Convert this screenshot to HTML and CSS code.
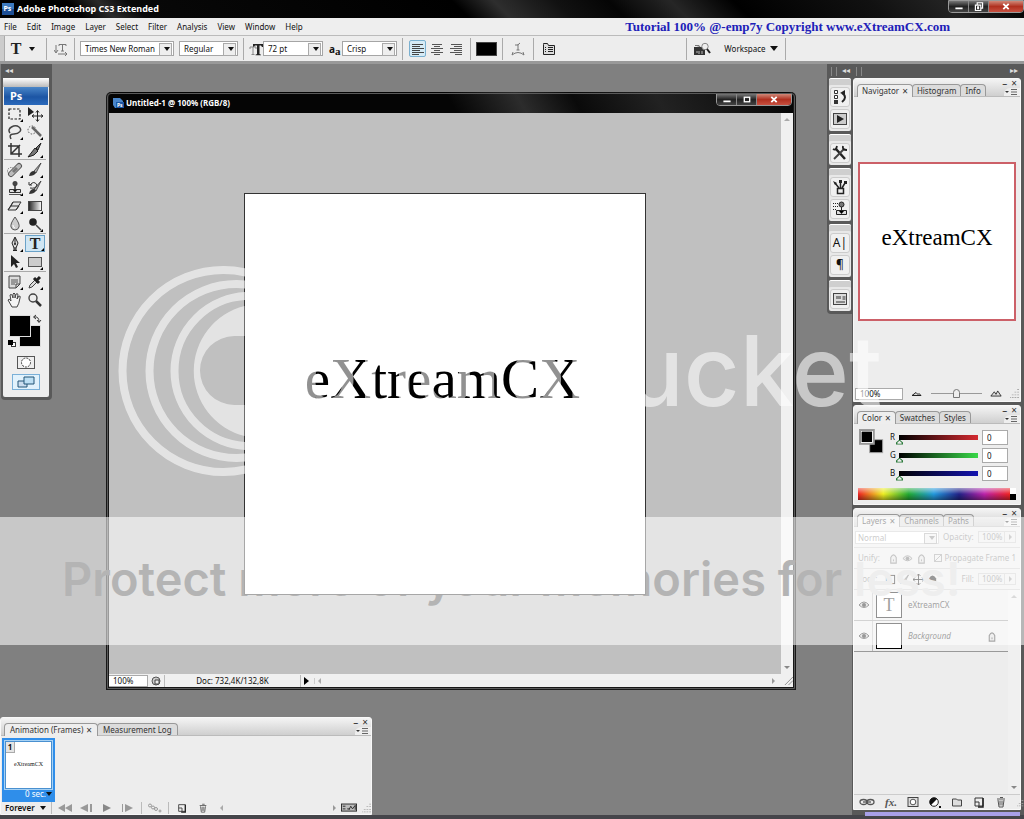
FILE: index.html
```html
<!DOCTYPE html>
<html lang="en">
<head>
<meta charset="utf-8">
<title>Adobe Photoshop CS3 Extended</title>
<link rel="stylesheet" href="styles.css">
</head>
<body>
<svg class="defs" aria-hidden="true">
  <symbol id="corner" viewBox="0 0 16 16"><path d="M16 13v3h-3z"/></symbol>
  <symbol id="grip" viewBox="0 0 10 10"><path d="M9 0v1M9 3v1M9 6v1M9 9v1M6 3v1M6 6v1M6 9v1M3 6v1M3 9v1M0 9v1" stroke="#aaa" stroke-width="2"/></symbol>
  <symbol id="flyout" viewBox="0 0 16 8"><path d="M1 3h4l-2 2z" fill="#333"/><path d="M7 1.500h6M7 4h6M7 6.500h6" stroke="#666"/></symbol>
  <symbol id="page" viewBox="0 0 12 12"><path d="M2 2h8v8H6V6H2z" fill="#eee" stroke="#333"/><path d="M2 6v4h4" fill="none" stroke="#333"/><path d="M10 2v9H5" fill="none" stroke="#222" stroke-width="1.500"/></symbol>
  <symbol id="trash" viewBox="0 0 12 12"><path d="M2 3h8M5 1.500h3M3 4l1 7h4l1-7M5 4.500v5M7 4.500v5" fill="none" stroke="#555"/></symbol>
  <symbol id="eye" viewBox="0 0 12 10"><path d="M1 5q5-6 10 0-5 5-10 0z" fill="#ccc" stroke="#222"/><circle cx="6" cy="5" r="2" fill="#111"/></symbol>
  <symbol id="lock" viewBox="0 0 10 12"><path d="M2 11V5q3-6 6 0v6z" fill="#ddd" stroke="#333" stroke-width="1.200"/><path d="M5 7v2" stroke="#333"/></symbol>
  <symbol id="brush" viewBox="0 0 16 16"><path d="M14 1 7 9l2 2z" fill="#aaa" stroke="#333" stroke-width=".8"/><path d="M7 9q-4 0-5 5 5 0 7-3z" fill="#333"/></symbol>
  <symbol id="stamp" viewBox="0 0 16 16"><circle cx="8" cy="3.500" r="2.500" fill="#444"/><path d="M8 5v5" stroke="#333" stroke-width="1.500"/><path d="M2.500 12.500v-3h11v3z" fill="#ddd" stroke="#333"/><path d="M6 10h4l-2 2.500z" fill="#111"/><path d="M2 14.500h12" stroke="#555"/></symbol>
</svg>
<div class="app">
  <header class="titlebar">
    <svg class="logo" viewBox="0 0 12 12"><rect width="12" height="12" fill="#3c7ac0"/><rect y="6" width="12" height="6" fill="#1d4f96"/><text x="1.500" y="8" class="logo-text">Ps</text></svg>
    <h1>Adobe Photoshop CS3 Extended</h1>
    <div class="winbtns">
      <button aria-label="Minimize"><svg viewBox="0 0 12 10"><path d="M2 7h8" stroke="#fff" stroke-width="2"/></svg></button>
      <button aria-label="Restore"><svg viewBox="0 0 12 10"><path d="M2 3.500h6v6H2zM4 3V.8h6v6H8M4.500 5.500h1v2h-1z" fill="none" stroke="#fff" stroke-width="1.300"/></svg></button>
      <button class="close" aria-label="Close"><svg viewBox="0 0 12 10"><path d="m3 2 6 6M9 2 3 8" stroke="#fff" stroke-width="2"/></svg></button>
    </div>
  </header>
  <nav class="menubar">
    <button>File</button><button>Edit</button><button>Image</button><button>Layer</button><button>Select</button><button>Filter</button><button>Analysis</button><button>View</button><button>Window</button><button>Help</button>
    <span class="credit">Tutorial 100% @-emp7y Copyright www.eXtreamCX.com</span>
  </nav>
  <section class="options" aria-label="Type options">
    <span class="handle"></span>
    <button class="type-tool"><b class="serif-t">T</b><i class="tri"></i></button>
    <span class="sep"></span>
    <button class="ic wide" aria-label="Text orientation"><svg viewBox="0 0 14 14"><path d="M2 3v7M0 8l2 3 2-3M5 4V2.500h7V4M8.500 2v7M7 9h3M4 12h9M11 10l2 2-2 2" fill="none" stroke="#777"/></svg></button>
    <span class="sep"></span>
    <label class="sel w-font"><select aria-label="Font"><option>Times New Roman</option></select></label>
    <label class="sel w-style"><select aria-label="Font style"><option>Regular</option></select></label>
    <span class="sep"></span>
    <svg class="ic size" viewBox="0 0 14 14"><path d="M4 2h10v3h-1l-1-1.500h-1.500V12l1.500.7v.5H6.500v-.5l1.500-.7V3.500H6L5 5H4z" fill="#222"/><path d="M1 5h6v2M4 5v7M2.500 12.500h3M1 5v2" fill="none" stroke="#888"/></svg>
    <label class="sel w-size"><select aria-label="Font size"><option>72 pt</option></select></label>
    <span class="aa">a<small>a</small></span>
    <label class="sel w-aa"><select aria-label="Anti-aliasing"><option>Crisp</option></select></label>
    <span class="sep"></span>
    <button class="ic align on" aria-label="Left align"><svg viewBox="0 0 14 12"><path d="M1 1.500h11M1 3.500h8M1 5.500h12M1 7.500h8M1 9.500h12M1 11.500h7" stroke="#444"/></svg></button>
    <button class="ic align" aria-label="Center align"><svg viewBox="0 0 14 12"><path d="M2 1.500h10M4 3.500h6M1 5.500h12M4 7.500h6M1 9.500h12M4 11.500h6" stroke="#555"/></svg></button>
    <button class="ic align" aria-label="Right align"><svg viewBox="0 0 14 12"><path d="M2 1.500h11M5 3.500h8M1 5.500h12M5 7.500h8M1 9.500h12M6 11.500h7" stroke="#555"/></svg></button>
    <span class="sep"></span>
    <button class="swatch" aria-label="Text color"></button>
    <span class="sep"></span>
    <button class="ic mid" aria-label="Warp text"><svg viewBox="0 0 14 14"><path d="M4 3q3 1 5-2M7 2v6M5.500 8h3M1 13q6-5 12 0M1 13l1-3M13 13l-1-3" fill="none" stroke="#777"/></svg></button>
    <span class="sep"></span>
    <button class="ic mid" aria-label="Character panel"><svg viewBox="0 0 14 14"><path d="M1.500 2.500v10h11v-9h-6l-1-2h-4z" fill="#ddd" stroke="#222"/><path d="M6 5.500h5M6 7.500h5M6 9.500h5M3 5.500h1M3 7.500h1M3 9.500h1" stroke="#222"/></svg></button>
    <span class="sep push"></span>
    <button class="ic bridge" aria-label="Go to Bridge"><svg viewBox="0 0 18 14"><path d="M1 5h11v8H1z" fill="#333"/><path d="M2 3.500h4L7 5" fill="#777" stroke="#777"/><path d="M3 10h2M6 9v3M9 9v3" stroke="#bbb"/><circle cx="12" cy="4.500" r="3.200" fill="#eee" stroke="#888"/><path d="m14 7 3 4" stroke="#222" stroke-width="2"/></svg></button>
    <button class="workspace-btn">Workspace <i class="tri"></i></button>
    <span class="sep"></span>
  </section>

  <main class="desktop">
    <aside class="tools">
      <div class="collapse">◂◂</div>
      <div class="tools-body">
        <div class="grip-bar"></div>
        <div class="ps-bar">Ps</div>
        <div class="tool-grid">
          <button aria-label="Marquee"><svg viewBox="0 0 16 16"><rect x="2" y="3" width="11" height="10" fill="none" stroke="#222" stroke-width="1.200" stroke-dasharray="2.500 1.500"/><use href="#corner"/></svg></button>
          <button aria-label="Move"><svg viewBox="0 0 16 16"><path d="M1 1v9l6-4z" fill="#222"/><path d="M10.500 5v10M5.500 10h10M9 6.500l1.500-2 1.500 2M9 13.500l1.500 2 1.500-2M7 8.500 5 10l2 1.500M14 8.500l2 1.500-2 1.500" fill="none" stroke="#222"/></svg></button>
          <button aria-label="Lasso"><svg viewBox="0 0 16 16"><path d="M3 9C-1 4 8 0 12 3s0 7-5 7-4 3-3 5" fill="none" stroke="#444" stroke-width="1.500"/><use href="#corner"/></svg></button>
          <button aria-label="Quick selection"><svg viewBox="0 0 16 16"><circle cx="5" cy="6" r="4" fill="none" stroke="#555" stroke-dasharray="1.500 1.500"/><path d="m5 3 9 9" stroke="#666" stroke-width="2.500"/><use href="#corner"/></svg></button>
          <button aria-label="Crop"><svg viewBox="0 0 16 16"><path d="M4 1v11h11M1 4h11v11M4 12l9-9" fill="none" stroke="#333" stroke-width="1.500"/></svg></button>
          <button aria-label="Slice"><svg viewBox="0 0 16 16"><path d="m14 1-5 5 2 2zM8 6l3 3q-3 5-10 6z" fill="#777" stroke="#222"/><use href="#corner"/></svg></button>
        </div>
        <div class="tool-grid">
          <button aria-label="Healing brush"><svg viewBox="0 0 16 16"><circle cx="4" cy="9" r="3.500" fill="none" stroke="#777" stroke-dasharray="1.500 1"/><path d="m4 12 8-8" stroke="#555" stroke-width="6" stroke-linecap="round"/><path d="m4 12 8-8" stroke="#bbb" stroke-width="4" stroke-linecap="round"/><path d="m6 10 4-4" stroke="#777" stroke-width="3"/><use href="#corner"/></svg></button>
          <button aria-label="Brush"><svg viewBox="0 0 16 16"><use href="#brush"/><use href="#corner"/></svg></button>
          <button aria-label="Clone stamp"><svg viewBox="0 0 16 16"><use href="#stamp"/><use href="#corner"/></svg></button>
          <button aria-label="History brush"><svg viewBox="0 0 16 16"><use href="#brush"/><path d="M3 5q4-5 7 0-1 4-7 3M2 2v3h3" fill="none" stroke="#333"/><use href="#corner"/></svg></button>
          <button aria-label="Eraser"><svg viewBox="0 0 16 16"><path d="m6 4 8 0-5 8H1zM4 8h8M6 4 4 8l-3 4M12 8l-3 4" fill="#e4e4e4" stroke="#333"/><use href="#corner"/></svg></button>
          <button aria-label="Gradient"><svg viewBox="0 0 16 16"><defs><linearGradient id="tg"><stop stop-color="#222"/><stop offset="1" stop-color="#fff"/></linearGradient></defs><rect x="1.500" y="3.500" width="13" height="9" fill="url(#tg)" stroke="#444"/><use href="#corner"/></svg></button>
          <button aria-label="Blur"><svg viewBox="0 0 16 16"><path d="M8 1q5 7 4 10-1 3-4 3t-4-3Q3 8 8 1z" fill="#ccc" stroke="#555"/><path d="M6 9q0 3 2 3" stroke="#fff" fill="none"/><use href="#corner"/></svg></button>
          <button aria-label="Dodge"><svg viewBox="0 0 16 16"><circle cx="6" cy="6" r="3.800" fill="#222"/><path d="m9 9 5 5" stroke="#444" stroke-width="1.500"/><use href="#corner"/></svg></button>
        </div>
        <div class="tool-grid">
          <button aria-label="Pen"><svg viewBox="0 0 16 16"><path d="m8 1 3 6-2 5H7L5 7zM8 2v6M6 14.500h4M7 12v2h2v-2" fill="#ddd" stroke="#222"/><circle cx="8" cy="8" r="1" fill="#222"/><use href="#corner"/></svg></button>
          <button class="on" aria-label="Type"><b class="serif-t">T</b><svg class="mark" viewBox="0 0 16 16"><use href="#corner"/></svg></button>
          <button aria-label="Path selection"><svg viewBox="0 0 16 16"><path d="M4 1v12l3-3 2 4 2-1-2-4h4z" fill="#222"/><use href="#corner"/></svg></button>
          <button aria-label="Rectangle"><svg viewBox="0 0 16 16"><rect x="1.500" y="3.500" width="13" height="9" fill="#ccc" stroke="#555"/><use href="#corner"/></svg></button>
        </div>
        <div class="tool-grid">
          <button aria-label="Notes"><svg viewBox="0 0 16 16"><path d="M2 2h11v8l-4 4H2zM9 14v-4h4" fill="#ddd" stroke="#444"/><path d="M4 6h7M4 8h7M4 10h4" stroke="#555"/><use href="#corner"/></svg></button>
          <button aria-label="Eyedropper"><svg viewBox="0 0 16 16"><path d="m2 14 1-3 6-6 2 2-6 6z" fill="#ddd" stroke="#444"/><path d="m7 4 5 5M10 6l3-3" stroke="#222" stroke-width="3"/><use href="#corner"/></svg></button>
          <button aria-label="Hand"><svg viewBox="0 0 16 16"><path d="M5 15 1 8q1-2 3 1L3 3q2-2 3 3V2q1-2 2 0v4l1-4q2-1 2 1l-1 4 2-3q2 0 1 2-1 6-3 9z" fill="#f4f4f4" stroke="#444"/></svg></button>
          <button aria-label="Zoom"><svg viewBox="0 0 16 16"><circle cx="6" cy="6" r="4" fill="#eee" stroke="#444" stroke-width="1.400"/><path d="m9 9 5 5" stroke="#333" stroke-width="2.500"/></svg></button>
        </div>
        <svg class="colors" viewBox="0 0 40 34"><path d="M30 3q5-1 5 5M32 1l-2.500 2L32 5M33 6l2 2.500L37 6" fill="none" stroke="#333"/><rect x="15.500" y="11.500" width="21" height="21" stroke="#ddd"/><rect x="5.500" y="1.500" width="21" height="21" stroke="#ddd"/><rect x="7" y="3" width="18" height="18"/><rect x="7.500" y="28.500" width="4" height="4" fill="#fff" stroke="#333"/><rect x="4" y="26" width="5" height="5"/></svg>
        <button class="mask-btn" aria-label="Quick mask"><svg viewBox="0 0 18 13"><rect x=".5" y=".5" width="17" height="12" fill="#eee" stroke="#555"/><circle cx="9" cy="6.500" r="4.500" fill="#fff" stroke="#333" stroke-dasharray="2 1"/></svg></button>
        <button class="screen-btn" aria-label="Screen mode"><svg viewBox="0 0 20 12"><path d="M2 5h9v6H2z" fill="#cde" stroke="#257"/><path d="M8 1h10v7H8z" fill="#bfe0f4" stroke="#257"/></svg></button>
      </div>
    </aside>

    <section class="doc" aria-label="Untitled-1">
      <div class="doc-title">
        <svg viewBox="0 0 12 12"><path d="M1 1h7l3 3v7H3L1 8z" fill="#4a86ca"/><rect x="4" y="5" width="8" height="6" fill="#1c56a4"/><text x="5" y="10" class="logo-text small">Ps</text></svg>
        <h2>Untitled-1 @ 100% (RGB/8)</h2>
        <div class="winbtns">
          <button aria-label="Minimize document"><svg viewBox="0 0 12 10"><path d="M2 7h8" stroke="#fff" stroke-width="2"/></svg></button>
          <button aria-label="Maximize document"><svg viewBox="0 0 12 10"><rect x="3" y="2.500" width="6" height="5" fill="none" stroke="#fff" stroke-width="1.500"/></svg></button>
          <button class="close" aria-label="Close document"><svg viewBox="0 0 12 10"><path d="m3 2 6 6M9 2 3 8" stroke="#fff" stroke-width="2"/></svg></button>
        </div>
      </div>
      <div class="doc-body">
        <div class="stage"><div class="canvas">eXtreamCX</div></div>
        <div class="vscroll"><i class="up"></i><i class="down"></i></div>
      </div>
      <div class="status">
        <input class="zoom" aria-label="Document zoom" value="100%">
        <svg class="st-ic" viewBox="0 0 12 12"><circle cx="6" cy="6" r="4" fill="#ccc" stroke="#555"/><path d="M5 5h4v4H5z" fill="#eee" stroke="#444"/></svg>
        <span class="info">Doc: 732,4K/132,8K</span>
        <i class="play"></i>
        <span class="hscroll"><i class="left"></i><i class="right"></i></span>
        <svg class="rs" viewBox="0 0 10 10"><path d="m1 10 9-9M5 10l5-5" stroke="#888"/></svg>
      </div>
    </section>

    <section class="anim panel" aria-label="Animation">
      <div class="tabs"><button class="tab on">Animation (Frames) <span class="x">×</span></button><button class="tab">Measurement Log</button><span class="pc"><span>–</span><span>×</span></span><svg class="fly" viewBox="0 0 16 8"><use href="#flyout"/></svg></div>
      <div class="frames"><div class="frame"><div class="thumb"><b>1</b><span>eXtreamCX</span></div><button class="delay">0 sec.<i class="tri"></i></button></div></div>
      <div class="anim-bar">
        <button class="loop">Forever <i class="tri"></i></button>
        <span class="vs"></span>
        <button aria-label="First frame"><svg viewBox="0 0 16 10"><path d="M8 1v8L1 5zM15 1v8L8 5z" fill="#999"/></svg></button>
        <button aria-label="Previous frame"><svg viewBox="0 0 16 10"><path d="M10 1v8L2 5zM12 1h2v8h-2z" fill="#999"/></svg></button>
        <button aria-label="Play"><svg viewBox="0 0 16 10"><path d="m4 1 8 4-8 4z" fill="#888"/></svg></button>
        <button aria-label="Next frame"><svg viewBox="0 0 16 10"><path d="M2 1h1v8H2zM5 1l8 4-8 4z" fill="#999"/></svg></button>
        <span class="vs"></span>
        <button aria-label="Tween"><svg viewBox="0 0 16 10"><g fill="none" stroke="#999"><circle cx="3" cy="2.500" r="1.500"/><circle cx="6" cy="4.500" r="1.500"/><circle cx="9" cy="6" r="1.500"/><circle cx="13" cy="8" r="1"/></g></svg></button>
        <span class="vs"></span>
        <button aria-label="Duplicate frame"><svg viewBox="0 0 12 12"><use href="#page"/></svg></button>
        <button aria-label="Delete frame"><svg viewBox="0 0 12 12"><use href="#trash"/></svg></button>
        <i class="left"></i><i class="right"></i>
        <button aria-label="Timeline"><svg viewBox="0 0 18 10"><rect x=".5" y=".5" width="17" height="8" fill="#bbb" stroke="#222"/><path d="M2 3h3M2 6h3M7 6h3M9 7l2-4 2 3 3-4v5" fill="none" stroke="#222"/></svg></button>
        <svg class="gr" viewBox="0 0 10 10"><use href="#grip"/></svg>
      </div>
    </section>

    <aside class="dock-icons">
      <div class="collapse"><i class="bars"></i>◂◂</div>
      <div class="group"><button aria-label="History"><svg viewBox="0 0 16 16"><path d="M2.500 1.500h3v3h-3zM2.500 6.500h3v3h-3z" fill="#fff" stroke="#333"/><path d="M2 11h4v4H2z" fill="#333"/><path d="M10 4q6 4 0 9" fill="none" stroke="#222" stroke-width="2"/><path d="m8 4 5-3v5z" fill="#222"/></svg></button><button aria-label="Actions"><svg viewBox="0 0 16 16"><rect x="1.500" y="2.500" width="13" height="11" fill="#ccc" stroke="#444"/><path d="m5 4 7 4-7 4z" fill="#222"/></svg></button></div>
      <div class="group"><button aria-label="Tool presets"><svg viewBox="0 0 16 16"><path d="m4 4 9 10" stroke="#222" stroke-width="2.500"/><path d="M12 4 2 14" stroke="#444" stroke-width="2"/><path d="M1 4q3 2 4-3M11 1q-1 4 4 4" fill="none" stroke="#222" stroke-width="1.800"/></svg></button></div>
      <div class="group"><button aria-label="Brushes"><svg viewBox="0 0 16 16"><path d="M5.500 9.500h6v5h-6z" fill="#eee" stroke="#222" stroke-width="1.500"/><path d="M7 9 3 4M8.500 9V2M10 9l3-5" stroke="#222" stroke-width="1.500"/><path d="m1 2 4 2-2 2zM7 1h3v3H7zM12 2h3v3h-3z" fill="#222"/></svg></button><button aria-label="Clone source"><svg viewBox="0 0 16 16"><path d="M1 2.500h5M1 5.500h5M1 8.500h3" stroke="#222" stroke-dasharray="1 1"/><circle cx="9.500" cy="3.500" r="2.500" fill="#777" stroke="#222"/><path d="M9.500 6v3M4.500 9.500h10v4h-10z" fill="#ddd" stroke="#222"/><path d="M7 10h5l-2.500 3z"/></svg></button></div>
      <div class="group"><button aria-label="Character"><span class="glyph">A|</span></button><button aria-label="Paragraph"><span class="glyph">¶</span></button></div>
      <div class="group"><button aria-label="Layer comps"><svg viewBox="0 0 16 16"><rect x="1.500" y="2.500" width="13" height="11" fill="#ddd" stroke="#444"/><path d="M4 5h5v3H4z" fill="#888"/><path d="M10.500 6h3M10.500 8h3M4 11h9" stroke="#333"/></svg></button></div>
    </aside>

    <aside class="dock">
      <div class="collapse"><i class="bars"></i><span>▸▸</span></div>
      <section class="panel navigator" aria-label="Navigator">
        <div class="tabs"><button class="tab on">Navigator <span class="x">×</span></button><button class="tab">Histogram</button><button class="tab">Info</button><span class="pc"><span>–</span><span>×</span></span><svg class="fly" viewBox="0 0 16 8"><use href="#flyout"/></svg></div>
        <div class="nav-body"><div class="preview">eXtreamCX</div></div>
        <div class="nav-foot"><input class="zoom" aria-label="Zoom" value="100%"><svg class="mt" viewBox="0 0 12 6"><path d="m1 5 4-3 2 2 1-1 2 2z" fill="#ddd" stroke="#222"/></svg><input type="range" aria-label="Zoom slider" value="50"><svg class="mt" viewBox="0 0 14 8"><path d="m1 7 4-5 2 3 2-4 4 6z" fill="#ddd" stroke="#222"/></svg><svg class="gr" viewBox="0 0 10 10"><use href="#grip"/></svg></div>
      </section>
      <section class="panel color" aria-label="Color">
        <div class="tabs"><button class="tab on">Color <span class="x">×</span></button><button class="tab">Swatches</button><button class="tab">Styles</button><span class="pc"><span>–</span><span>×</span></span><svg class="fly" viewBox="0 0 16 8"><use href="#flyout"/></svg></div>
        <div class="color-body">
          <svg class="fgbg" viewBox="0 0 28 28"><rect x="11.500" y="11.500" width="14" height="14" stroke="#aaa"/><rect x="1" y="1" width="15" height="15" stroke="#999" stroke-width="2"/><rect x="2.500" y="2.500" width="12" height="12" stroke="#fff"/><rect x="3" y="3" width="11" height="11"/></svg>
          <div class="chans">
            <div class="chan"><label for="r">R</label><span class="track r"></span><input id="r" value="0"></div>
            <div class="chan"><label for="g">G</label><span class="track g"></span><input id="g" value="0"></div>
            <div class="chan"><label for="b">B</label><span class="track b"></span><input id="b" value="0"></div>
          </div>
        </div>
        <div class="ramp"><span></span></div>
      </section>
      <section class="panel layers" aria-label="Layers">
        <div class="tabs"><button class="tab on">Layers <span class="x">×</span></button><button class="tab">Channels</button><button class="tab">Paths</button><span class="pc"><span>–</span><span>×</span></span><svg class="fly" viewBox="0 0 16 8"><use href="#flyout"/></svg></div>
        <div class="lrow"><label class="sel blend"><select aria-label="Blend mode"><option>Normal</option></select></label><label for="op">Opacity:</label><span class="combo"><input id="op" class="pct" value="100%"><button class="step" aria-label="Opacity slider"><i class="right"></i></button></span></div>
        <div class="lrow"><span>Unify:</span><span class="icons dim"><svg viewBox="0 0 10 12"><use href="#lock"/></svg><svg viewBox="0 0 12 10"><use href="#eye"/></svg><svg viewBox="0 0 10 12"><use href="#lock"/></svg></span><label class="prop"><input type="checkbox" checked>Propagate Frame 1</label></div>
        <div class="lrow"><span>Lock:</span><span class="icons"><svg viewBox="0 0 12 12"><rect x="1.500" y="1.500" width="9" height="9" fill="#eee" stroke="#000"/></svg><svg viewBox="0 0 16 16"><use href="#brush"/></svg><svg viewBox="0 0 12 12"><path d="M6 0v12M0 6h12M4 2l2-2 2 2M4 10l2 2 2-2M2 4 0 6l2 2M10 4l2 2-2 2" fill="none" stroke="#000"/></svg><svg viewBox="0 0 10 12"><path d="M1 11V5q4-7 8 0v6z" fill="#111"/></svg></span><label class="fill" for="fl">Fill:</label><span class="combo"><input id="fl" class="pct" value="100%"><button class="step" aria-label="Fill slider"><i class="right"></i></button></span></div>
        <div class="list">
          <div class="rows">
            <div class="layer"><button class="vis" aria-label="Toggle eXtreamCX"><svg viewBox="0 0 12 10"><use href="#eye"/></svg></button><span class="lthumb">T</span><span>eXtreamCX</span></div>
            <div class="layer"><button class="vis" aria-label="Toggle Background"><svg viewBox="0 0 12 10"><use href="#eye"/></svg></button><span class="lthumb"></span><em>Background</em><svg class="lk" viewBox="0 0 10 12"><use href="#lock"/></svg></div>
          </div>
          <div class="lscroll"><i class="up"></i><i class="down"></i></div>
        </div>
        <div class="lfoot">
          <button aria-label="Link layers"><svg viewBox="0 0 16 12"><g fill="none" stroke="#555" stroke-width="1.300"><ellipse cx="4.500" cy="6" rx="3.500" ry="2.500"/><ellipse cx="11.500" cy="6" rx="3.500" ry="2.500"/><path d="M4 6h8"/></g></svg></button>
          <button class="fx">fx.</button>
          <button aria-label="Add mask"><svg viewBox="0 0 12 12"><rect x="1" y="1.500" width="10" height="9" fill="#ddd" stroke="#444"/><circle cx="6" cy="6" r="2.800" fill="#fff" stroke="#555"/></svg></button>
          <button aria-label="Adjustment layer"><svg viewBox="0 0 12 12"><circle cx="5" cy="6" r="4.300" fill="#fff" stroke="#222"/><path d="M2 9A4 4 0 0 1 8 3zM10 10h2v2h-2z" fill="#111"/></svg></button>
          <button aria-label="New group"><svg viewBox="0 0 12 12"><path d="M1.500 3h4l1 1h4v6h-9z" fill="#ddd" stroke="#444"/></svg></button>
          <button aria-label="New layer"><svg viewBox="0 0 12 12"><use href="#page"/></svg></button>
          <button aria-label="Delete layer"><svg viewBox="0 0 12 12"><use href="#trash"/></svg></button>
          <svg class="gr" viewBox="0 0 10 10"><use href="#grip"/></svg>
        </div>
      </section>
    </aside>
    <div class="task-edge"></div>
  </main>

  <div class="slogan">Protect more of your memories for <span>less!</span></div>
  <div class="band"></div>
  <div class="brand">
    <svg viewBox="0 0 126 212"><g fill="none" stroke="#fff" stroke-width="8"><circle cx="105" cy="106" r="101"/><circle cx="118" cy="106" r="87"/><circle cx="131" cy="106" r="75"/></g><path d="M126 41A67 67 0 0 0 126 171V140H116A34 34 0 0 1 116 71H126z" fill="#fff"/></svg>
    <span>photobucket</span>
  </div>
</div>
</body>
</html>
```
FILE: styles.css
```css
* { box-sizing: border-box; }
body { margin: 0; font: 8px/12px "Noto Sans", "Open Sans", sans-serif; color: #111; background: #808080; }
button, input, select { font: inherit; color: inherit; margin: 0; padding: 0; border: 0; background: none; border-radius: 0; }
button { display: flex; align-items: center; justify-content: center; white-space: nowrap; }
input { min-width: 0; }
svg { display: block; }
h1, h2 { margin: 0; color: #fff; font-weight: 700; }
h1 { font-size: 9px; }
h2 { font-size: 8px; }
.defs { position: absolute; width: 0; height: 0; }
.app { position: relative; display: flex; flex-direction: column; min-height: 100vh; overflow: hidden; }

.titlebar { display: flex; align-items: center; gap: 3px; height: 18px; padding-left: 2px; background: linear-gradient(45deg, #000 8%, #2a2a2a 11%, #080808 14%, #000 45%, #2e2e2e 49%, #111 55%, #050505 60%, #262626 66%, #000 72%, #111 85%, #222 92%, #000); }
.logo { width: 12px; height: 12px; }
.logo-text { font: 700 7px "Noto Sans", sans-serif; fill: #fff; }
.logo-text.small { font-size: 5px; }
.winbtns { display: flex; margin-left: auto; align-self: flex-start; border: 1px solid #999; border-radius: 0 0 4px 4px; overflow: hidden; }
.winbtns button { width: 20px; height: 11px; background: linear-gradient(#777, #222 50%, #444); border-right: 1px solid #888; }
.winbtns svg { width: 12px; height: 9px; }
.winbtns .close { width: 34px; border: 0; background: linear-gradient(#d08878, #b03020 50%, #c85040); }

.menubar { display: flex; align-items: center; gap: 10px; height: 17px; padding-left: 4px; background: #eee; }
.credit { margin-left: auto; padding-right: 74px; font: 700 13px/16px "Liberation Serif", serif; color: #2020b8; white-space: nowrap; }

.options { display: flex; align-items: center; height: 29px; background: #ededed; border-top: 1px solid #bbb; border-bottom: 3px solid #999; }
.handle { width: 5px; height: 25px; background: #ccc; border-right: 1px solid #aaa; }
.sep { width: 1px; height: 22px; background: #aaa; margin: 0 5px; flex: none; }
.type-tool { width: 36px; gap: 8px; }
.serif-t { font: 700 16px/16px "Liberation Serif", serif; color: #222; }
.tri { display: inline-block; border: 3px solid transparent; border-top: 4px solid #111; border-bottom: 0; }
.ic { width: 16px; flex: none; }
.ic svg, svg.ic { width: 14px; height: 14px; }
.ic.wide { width: 17px; }
.ic.mid { width: 20px; }
.sel { position: relative; display: block; height: 15px; flex: none; background: #fff; border: 1px solid #a5a5a5; }
.sel select { appearance: none; width: 100%; height: 13px; padding-left: 4px; display: block; outline: 0; }
.sel::before { content: ""; position: absolute; right: 1px; top: 1px; width: 11px; height: 11px; border: 1px solid #aaa; background: #eee; pointer-events: none; }
.sel::after { content: ""; position: absolute; right: 3px; top: 5px; border: 3px solid transparent; border-top: 4px solid #111; border-bottom: 0; pointer-events: none; }
.w-font { width: 94px; margin-right: 5px; }
.w-style { width: 59px; }
.w-size { width: 60px; }
.w-aa { width: 55px; }
.aa { width: 19px; padding-left: 6px; font: 700 10px/12px "Noto Sans", sans-serif; white-space: nowrap; }
.aa small { font: 700 11px/8px "Liberation Serif", serif; vertical-align: -2px; }
.align { width: 17px; height: 17px; margin-left: 1px; margin-right: 1px; border: 1px solid transparent; border-radius: 2px; }
.align svg { width: 14px; height: 12px; }
.align.on { background: #d6ebf6; border-color: #7ab0d0; }
.swatch { width: 21px; height: 14px; background: #000; border: 1px solid #444; }
.push { margin-left: 127px; }
.bridge { width: 20px; }
.bridge svg { width: 18px; height: 14px; }
.workspace-btn { width: 68px; gap: 4px; padding-left: 10px; }
.workspace-btn .tri { border-width: 5px 4px 0; }

.desktop { position: relative; flex: 1; min-height: 700px; background: #808080; border-bottom: 4px solid #45454a; }
.collapse { display: flex; align-items: center; gap: 5px; height: 14px; color: #ddd; font: 8px/14px "DejaVu Sans", sans-serif; padding-left: 2px; }
.tools { position: absolute; left: 1px; top: 0; width: 51px; padding: 0 3px 3px 2px; background: #595959; border-radius: 0 0 4px 4px; }
.tools-body { background: #eee; padding-bottom: 5px; border-radius: 2px; }
.grip-bar { height: 9px; background: linear-gradient(#fff, #bbb); }
.ps-bar { height: 18px; margin: 0 1px; padding-left: 6px; background: linear-gradient(#4a86c8, #1c55a4 55%, #2b6abc); color: #fff; font: 700 11px/18px "Noto Sans", sans-serif; }
.tool-grid { display: grid; grid-template-columns: 20px 20px; justify-content: center; border-bottom: 1px solid #aaa; margin: 0 3px 1px 1px; }
.tool-grid:nth-of-type(6) { border-bottom: 0; }
.tool-grid button { position: relative; height: 18px; }
.tool-grid svg { width: 16px; height: 16px; }
.tool-grid .on { height: 17px; background: #cfe6f4; border: 1px solid #6aa2c8; }
.mark { position: absolute; right: 0; bottom: 0; }
.colors { width: 40px; height: 34px; margin: 5px auto 8px 1px; }
.mask-btn { margin: 0 auto 5px; }
.mask-btn svg { width: 18px; height: 13px; }
.screen-btn { width: 28px; height: 16px; margin: 0 auto 2px; border: 1px solid #7ab0d8; background: #e2f2fc; }
.screen-btn svg { width: 20px; height: 12px; }

.doc { position: absolute; left: 106px; top: 28px; width: 690px; border: 3px solid #181818; border-top: 0; border-radius: 5px 5px 0 0; background: #181818; outline: 1px solid #5a5a5a; outline-offset: -2px; }
.doc-title { display: flex; align-items: center; gap: 2px; height: 21px; padding: 0 1px 0 3px; border-radius: 5px 5px 0 0; background: linear-gradient(60deg, #050505 50%, #2c2c2c 60%, #0a0a0a 68%, #222 80%, #050505); }
.doc-title > svg { width: 12px; height: 12px; }
.doc-title .winbtns { align-self: center; margin-bottom: 7px; }
.doc-body { display: flex; }
.stage { flex: 1; display: grid; place-items: center; height: 561px; background: #c0c0c0; }
.canvas { position: relative; z-index: 3; width: 402px; height: 402px; padding: 151px 5px 0 0; background: #fff; border: 1px solid #333; color: #000; text-align: center; font: 57px/68px "Liberation Serif", serif; }
.vscroll, .lscroll { display: flex; flex-direction: column; align-items: center; justify-content: space-between; width: 12px; padding: 5px 0; background: #f0f0f0; }
.up, .down { border: 3px solid transparent; }
.up { border-bottom-color: #aaa; border-top: 0; }
.down { border-top-color: #888; border-bottom: 0; }
.left, .right, .play { border: 3px solid transparent; flex: none; }
.left { border-right-color: #aaa; border-left: 0; }
.right { border-left-color: #999; border-right: 0; }
.play { border-width: 4px 0 4px 5px; border-left-color: #000; }
.status { display: flex; align-items: center; height: 13px; background: #f0f0f0; }
.status .zoom { width: 39px; height: 12px; padding-left: 4px; background: #fff; border: 1px solid #aaa; border-left: 0; }
.st-ic { width: 12px; height: 12px; margin: 0 2px; }
.info { width: 137px; text-align: center; border: 1px solid #bbb; border-width: 0 1px; }
.play { margin: 0 5px 0 3px; }
.hscroll { display: flex; flex: 1; justify-content: space-between; align-items: center; border-left: 1px solid #ccc; padding: 0 5px 0 3px; }
.rs { width: 9px; height: 9px; margin-left: 4px; }

.panel { display: flex; flex-direction: column; background: #ededed; border: 1px solid #f8f8f8; border-radius: 3px 3px 0 0; }
.tabs { position: relative; display: flex; align-items: flex-end; height: 18px; padding-left: 3px; border-bottom: 1px solid #bbb; background: linear-gradient(#f4f4f4, #cfcfcf); border-radius: 3px 3px 0 0; flex: none; }
.tab { height: 12px; padding: 0 4px; border: 1px solid #999; border-bottom: 0; border-radius: 4px 4px 0 0; background: #dcdcdc; color: #333; gap: 3px; margin-left: -1px; }
.tab.on { height: 13px; margin: 0 0 -1px; background: #eee; }
.x { font: 10px/10px "Noto Sans", sans-serif; }
.pc { display: flex; gap: 4px; margin-left: auto; align-self: flex-start; padding-right: 3px; font: 10px/8px "Noto Sans", sans-serif; color: #333; }
.fly { position: absolute; right: 0; bottom: 0; width: 16px; height: 8px; background: #eee; border-radius: 6px 0 0 0; }
.gr { width: 9px; height: 9px; margin-left: auto; flex: none; }

.anim { position: absolute; left: 0; bottom: 0; width: 372px; }
.anim .tab { padding: 0 5px; }
.frames { padding: 2px 1px 0; }
.frame { width: 53px; padding: 3px; background: #2f8eea; }
.thumb { position: relative; height: 48px; padding: 17px 0 0; border: 1px solid #4a90d0; outline: 1px solid #a8d2f4; background: #fff; text-align: center; font: 6px/10px "Liberation Serif", serif; }
.thumb b { position: absolute; left: 0; top: 0; width: 9px; background: #e4e4e4; border: 1px solid #aaa; border-width: 0 1px 1px 0; font: 700 8px/10px "Noto Sans", sans-serif; }
.delay { margin-left: auto; color: #fff; height: 10px; }
.anim-bar { display: flex; align-items: center; height: 12px; padding-left: 4px; gap: 5px; }
.anim-bar svg { width: 16px; height: 10px; }
.anim-bar .gr { width: 9px; margin: 0; }
.anim-bar .left { margin-left: 4px; }
.anim-bar .right { margin-left: auto; }
.loop { font-weight: 600; gap: 5px; }
.vs { width: 1px; height: 12px; background: #bbb; }

.dock-icons { position: absolute; right: 171px; top: 0; width: 26px; padding: 0 2px; background: #595959; border-radius: 0 0 0 4px; z-index: 1; }
.bars { width: 6px; height: 9px; border: 1px solid #888; border-width: 0 1px; flex: none; }
.group { padding: 8px 1px 2px; margin-bottom: 3px; background: #e8e8e8; border-radius: 2px; border-top: 1px solid #fff; box-shadow: inset 0 6px 0 #cfcfcf; }
.group button { width: 20px; height: 20px; margin-bottom: 2px; border: 1px solid #ccc; border-radius: 3px; background: #f0f0f0; }
.group button:last-child { margin-bottom: 0; }
.group svg { width: 16px; height: 16px; }
.glyph { font-size: 12px; line-height: 16px; }
.dock { position: absolute; right: 0; top: 0; bottom: 0; width: 172px; padding: 0 3px 1px 1px; background: #595959; display: flex; flex-direction: column; gap: 3px; }
.dock .collapse { justify-content: space-between; padding: 0 3px; margin-bottom: -3px; }
.navigator { height: 324px; }
.nav-body { flex: 1; display: flex; align-items: center; padding: 0 4px; }
.preview { width: 100%; height: 159px; border: 2px solid #cc6068; background: #fff; font: 23px/147px "Liberation Serif", serif; text-align: center; color: #000; }
.nav-foot { display: flex; align-items: center; gap: 8px; padding: 0 1px; height: 15px; }
.nav-foot .zoom { width: 48px; height: 12px; padding-left: 4px; background: #fff; border: 1px solid #aaa; }
.mt { width: 12px; height: 7px; flex: none; }
input[type=range] { appearance: none; flex: 1; height: 10px; background: linear-gradient(#999, #999) center / 100% 1px no-repeat; }
input[type=range]::-webkit-slider-thumb { appearance: none; width: 7px; height: 9px; border: 1px solid #777; border-radius: 4px 4px 0 0; background: #eee; }
.color { height: 100px; }
.color-body { display: flex; flex: 1; padding: 4px 12px 0 5px; gap: 5px; }
.fgbg { width: 26px; height: 26px; margin-top: 1px; flex: none; }
.chans { flex: 1; }
.chan { display: flex; align-items: center; gap: 4px; height: 18px; }
.chan label { width: 5px; }
.chan input { width: 26px; height: 15px; padding-left: 4px; background: #fff; border: 1px solid #aaa; }
.track { position: relative; flex: 1; height: 5px; }
.track::after { content: ""; position: absolute; left: -3px; top: 5px; width: 7px; height: 5px; background: #2a7a3a; clip-path: polygon(50% 0, 100% 60%, 100% 100%, 0 100%, 0 60%, 20% 60%, 20% 85%, 80% 85%, 80% 60%, 50% 25%, 20% 60%, 0 60%); }
.track.r { background: linear-gradient(90deg, #000, #d42a30); }
.track.g { background: linear-gradient(90deg, #000, #38d848); }
.track.b { background: linear-gradient(90deg, #000, #1414b0); }
.ramp { position: relative; margin: 0 4px 4px; height: 12px; background: linear-gradient(#fff8, #fff0 50%, #0006), linear-gradient(90deg, #e22, #ee2 16%, #2a3 32%, #29d 48%, #228 64%, #b2a 80%, #e22 96%); }
.ramp span { position: absolute; right: 0; top: 0; width: 6px; height: 12px; background: linear-gradient(#fff 50%, #000 50%); }
.layers { flex: 1; margin-bottom: 4px; }
.lrow { display: flex; align-items: center; gap: 4px; height: 21px; padding: 0 4px; border-bottom: 1px solid #ccc; color: #888; flex: none; }
.blend { width: 84px; height: 13px; margin-left: -3px; border-color: #ccc; }
.blend select { height: 11px; padding-left: 2px; }
.blend::before { height: 9px; }
.blend::after { top: 4px; border-top-color: #888; }
.combo { display: flex; margin-left: auto; }
.fill + .combo { margin-left: 0; }
.pct { width: 27px; height: 12px; padding-left: 3px; border: 1px solid #ccc; }
.step { width: 12px; height: 12px; border: 1px solid #ccc; margin-left: -1px; }
.icons { display: flex; gap: 3px; align-items: center; padding-left: 4px; }
.icons svg { width: 11px; height: 11px; }
.dim { opacity: .6; }
.prop { display: flex; align-items: center; gap: 2px; margin-left: auto; white-space: nowrap; }
.prop input { appearance: none; width: 8px; height: 8px; border: 1px solid #999; background: linear-gradient(135deg, transparent 45%, #999 45% 55%, transparent 55%); }
.fill { margin-left: auto; }
.list { display: flex; flex: 1; }
.rows { flex: 1; }
.layer { display: flex; align-items: center; height: 31px; gap: 6px; padding-left: 1px; border-bottom: 1px solid #999; color: #222; }
.vis { align-self: stretch; width: 18px; border-right: 1px solid #bbb; margin-right: -3px; }
.vis svg { width: 12px; height: 10px; }
.lthumb { width: 26px; height: 26px; border: 1px solid #000; background: #fff; text-align: center; font: 18px/24px "Liberation Serif", serif; }
.lk { width: 10px; height: 11px; margin-left: auto; margin-right: 11px; }
.lfoot { display: flex; align-items: center; gap: 10px; height: 15px; padding-left: 5px; border-top: 1px solid #ccc; flex: none; }
.lfoot svg { width: 12px; height: 12px; }
.lfoot button:first-child svg { width: 16px; }
.lfoot .gr { width: 9px; }
.fx { font: italic 700 11px/12px "Liberation Serif", serif; color: #555; }
.task-edge { position: absolute; right: 4px; bottom: -1px; width: 155px; height: 4px; background: #a8a0e8; }

.slogan { position: absolute; z-index: 2; left: 62px; top: 549px; font: 600 47px/60px Inter, "Open Sans", sans-serif; color: #535353; white-space: nowrap; pointer-events: none; }
.slogan span { color: #d8d8d8; }
.band { position: absolute; z-index: 4; left: 0; right: 0; top: 517px; height: 128px; background: rgba(255, 255, 255, .57); pointer-events: none; }
.brand { position: absolute; z-index: 5; left: 118px; top: 265px; display: flex; opacity: .57; color: #fff; font: 500 97px/212px Inter, "Open Sans", sans-serif; pointer-events: none; }
.brand svg { width: 127px; height: 212px; flex: none; }
.brand span { margin-left: 53px; }
```
